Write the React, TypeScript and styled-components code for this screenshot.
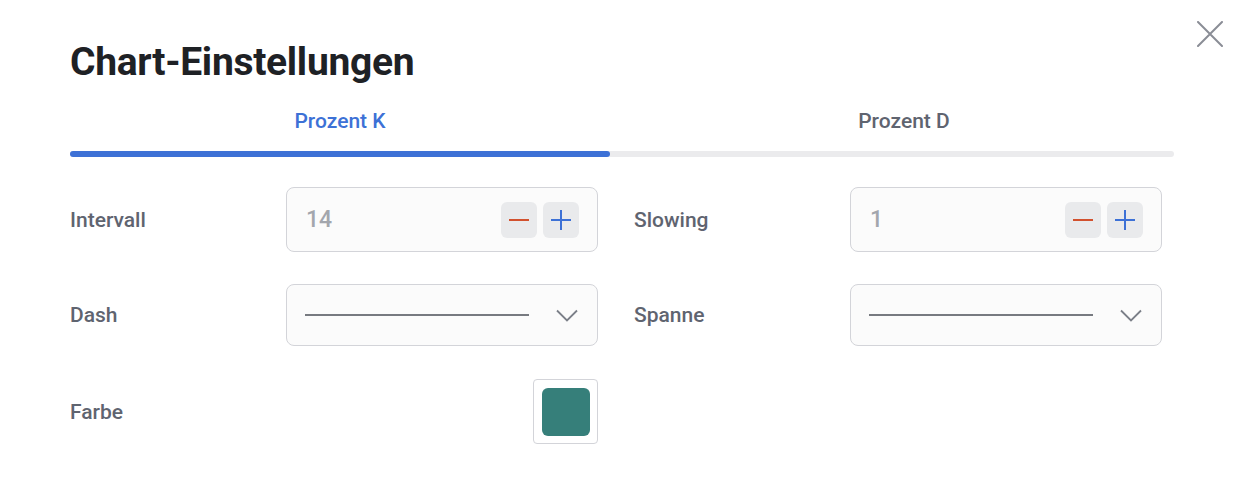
import React, {useState} from 'react';
import styled, {createGlobalStyle} from 'styled-components';

const GlobalStyle = createGlobalStyle`
	html, body {
		margin: 0;
		padding: 0;
		background: #ffffff;
		font-family: Roboto, "Noto Sans", "Liberation Sans", sans-serif;
	}
`;

type Tab = {
    id: string;
    label: string;
}

const tabs: Tab[] = [
    {id: 'k', label: 'Prozent K'},
    {id: 'd', label: 'Prozent D'},
];

const App = () => {
    const [activeTab, setActiveTab] = useState('k');
    const [interval, setInterval] = useState(14);
    const [slowing, setSlowing] = useState(1);

    return (
        <>
            <GlobalStyle/>
            <Dialog>
                <CloseButton aria-label='Schließen'>
                    <svg
                        width='26'
                        height='26'
                        viewBox='0 0 26 26'
                    >
                        <path
                            d='M1 1L25 25M25 1L1 25'
                            stroke='currentColor'
                            strokeWidth='2'
                            strokeLinecap='round'
                        />
                    </svg>
                </CloseButton>
                <Title>{'Chart-Einstellungen'}</Title>
                <TabList>
                    {tabs.map((tab) => (
                        <TabButton
                            key={tab.id}
                            $active={activeTab === tab.id}
                            onClick={() => setActiveTab(tab.id)}
                        >
                            {tab.label}
                        </TabButton>
                    ))}
                </TabList>
                <TabTrack>
                    <TabIndicator $index={tabs.findIndex((t) => t.id === activeTab)}/>
                </TabTrack>
                <Form>
                    <Field>
                        <Label>{'Intervall'}</Label>
                        <NumberInput
                            value={interval}
                            onChange={setInterval}
                        />
                    </Field>
                    <Field>
                        <Label>{'Slowing'}</Label>
                        <NumberInput
                            value={slowing}
                            onChange={setSlowing}
                        />
                    </Field>
                    <Field>
                        <Label>{'Dash'}</Label>
                        <LineSelect/>
                    </Field>
                    <Field>
                        <Label>{'Spanne'}</Label>
                        <LineSelect/>
                    </Field>
                    <Field>
                        <Label>{'Farbe'}</Label>
                        <ColorButton aria-label='Farbe wählen'>
                            <Swatch $color='#367f7a'/>
                        </ColorButton>
                    </Field>
                </Form>
            </Dialog>
        </>
    );
};

type NumberInputProps = {
    value: number;
    onChange: (value: number) => void;
}

const NumberInput = (props: NumberInputProps) => {
    return (
        <InputBox>
            <NumberValue>{props.value}</NumberValue>
            <Steppers>
                <StepButton
                    aria-label='Verringern'
                    onClick={() => props.onChange(props.value - 1)}
                >
                    <svg
                        width='22'
                        height='22'
                        viewBox='0 0 22 22'
                    >
                        <path
                            d='M1 11H21'
                            stroke='#d2512e'
                            strokeWidth='2'
                        />
                    </svg>
                </StepButton>
                <StepButton
                    aria-label='Erhöhen'
                    onClick={() => props.onChange(props.value + 1)}
                >
                    <svg
                        width='22'
                        height='22'
                        viewBox='0 0 22 22'
                    >
                        <path
                            d='M1 11H21M11 1V21'
                            stroke='#3d71d6'
                            strokeWidth='2'
                        />
                    </svg>
                </StepButton>
            </Steppers>
        </InputBox>
    );
};

const LineSelect = () => {
    return (
        <SelectBox>
            <LinePreview/>
            <svg
                width='22'
                height='13'
                viewBox='0 0 22 13'
            >
                <path
                    d='M1 1.5L11 11.5L21 1.5'
                    stroke='#7b7f88'
                    strokeWidth='1.8'
                    fill='none'
                />
            </svg>
        </SelectBox>
    );
};

const Dialog = styled.div`
	position: relative;
	box-sizing: border-box;
	width: 1244px;
	height: 502px;
	padding: 36px 70px 0;
`;

const CloseButton = styled.button`
	position: absolute;
	top: 21px;
	right: 21px;
	display: flex;
	padding: 0;
	border: none;
	background: none;
	color: #8a8d96;
	cursor: pointer;
`;

const Title = styled.h1`
	margin: 0;
	font-size: 39px;
	line-height: 52px;
	font-weight: 700;
	letter-spacing: -0.3px;
	color: #1e2125;
`;

const TabList = styled.div`
	display: grid;
	grid-template-columns: 1fr 1fr;
	column-gap: 24px;
	margin-top: 17px;
`;

const TabButton = styled.button<{$active: boolean}>`
	padding: 0;
	border: none;
	background: none;
	font-family: inherit;
	font-size: 21px;
	line-height: 32px;
	font-weight: 500;
	color: ${(p) => (p.$active ? '#3d71d6' : '#5f6470')};
	cursor: pointer;
`;

const TabTrack = styled.div`
	position: relative;
	height: 6px;
	margin-top: 14px;
	border-radius: 3px;
	background: #ebebed;
`;

const TabIndicator = styled.div<{$index: number}>`
	position: absolute;
	top: 0;
	bottom: 0;
	left: ${(p) => (p.$index === 0 ? '0' : 'calc(50% + 12px)')};
	width: calc(50% - 12px);
	border-radius: 3px;
	background: #3d71d6;
`;

const Form = styled.div`
	display: grid;
	grid-template-columns: 1fr 1fr;
	column-gap: 24px;
	row-gap: 32px;
	margin-top: 30px;
`;

const Field = styled.div`
	display: grid;
	grid-template-columns: 216px 312px;
	align-items: center;
	height: 64px;
`;

const Label = styled.label`
	font-size: 21px;
	font-weight: 500;
	color: #5f6470;
`;

const InputBox = styled.div`
	box-sizing: border-box;
	display: flex;
	align-items: center;
	justify-content: space-between;
	height: 65px;
	padding: 0 18px 0 19px;
	border: 1px solid #d3d4d9;
	border-radius: 8px;
	background: #fbfbfb;
`;

const NumberValue = styled.span`
	font-size: 23px;
	font-weight: 500;
	color: #a3a6ad;
`;

const Steppers = styled.div`
	display: flex;
	gap: 6px;
`;

const StepButton = styled.button`
	display: flex;
	align-items: center;
	justify-content: center;
	width: 36px;
	height: 36px;
	padding: 0;
	border: none;
	border-radius: 6px;
	background: #e9eaec;
	cursor: pointer;
`;

const SelectBox = styled.div`
	box-sizing: border-box;
	display: flex;
	align-items: center;
	gap: 27px;
	height: 62px;
	padding: 0 19px 0 18px;
	border: 1px solid #d3d4d9;
	border-radius: 8px;
	background: #fbfbfb;
	cursor: pointer;
`;

const LinePreview = styled.div`
	flex: 1;
	height: 2px;
	background: #777a80;
`;

const ColorButton = styled.button`
	box-sizing: border-box;
	justify-self: end;
	display: flex;
	align-items: center;
	justify-content: center;
	width: 65px;
	height: 65px;
	padding: 0;
	border: 1px solid #d3d4d9;
	border-radius: 4px;
	background: #ffffff;
	cursor: pointer;
`;

const Swatch = styled.span<{$color: string}>`
	width: 48px;
	height: 48px;
	border-radius: 6px;
	background: ${(p) => p.$color};
`;

export default App;
